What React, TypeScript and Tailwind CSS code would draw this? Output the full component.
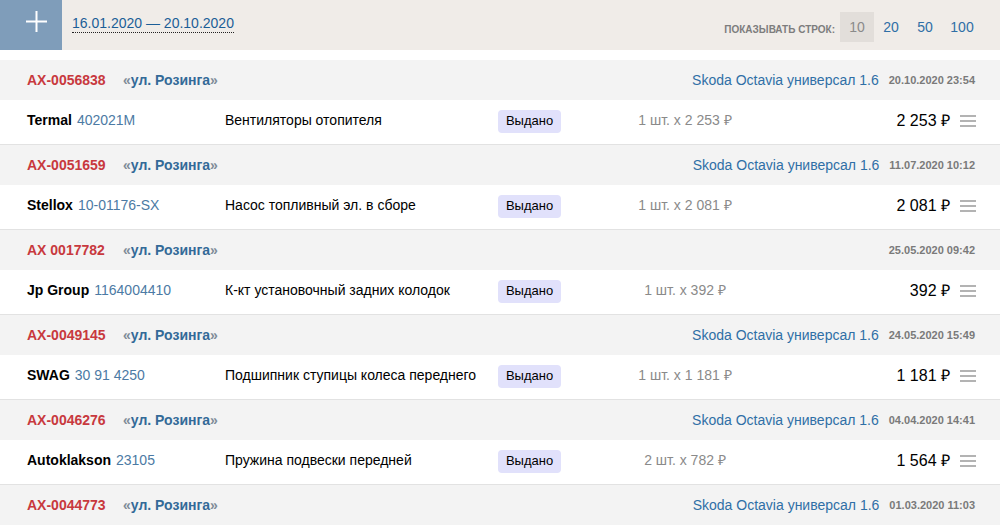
import React from "react";

type Row = {
  code: string;
  car: string;
  date: string;
  brand: string;
  art: string;
  desc: string;
  qty: string;
  price: string;
};

const rows: Row[] = [
  { code: "AX-0056838", car: "Skoda Octavia универсал 1.6", date: "20.10.2020 23:54", brand: "Termal", art: "402021M", desc: "Вентиляторы отопителя", qty: "1 шт. x 2 253 ₽", price: "2 253 ₽" },
  { code: "AX-0051659", car: "Skoda Octavia универсал 1.6", date: "11.07.2020 10:12", brand: "Stellox", art: "10-01176-SX", desc: "Насос топливный эл. в сборе", qty: "1 шт. x 2 081 ₽", price: "2 081 ₽" },
  { code: "AX 0017782", car: "", date: "25.05.2020 09:42", brand: "Jp Group", art: "1164004410", desc: "К-кт установочный задних колодок", qty: "1 шт. x 392 ₽", price: "392 ₽" },
  { code: "AX-0049145", car: "Skoda Octavia универсал 1.6", date: "24.05.2020 15:49", brand: "SWAG", art: "30 91 4250", desc: "Подшипник ступицы колеса переднего", qty: "1 шт. x 1 181 ₽", price: "1 181 ₽" },
  { code: "AX-0046276", car: "Skoda Octavia универсал 1.6", date: "04.04.2020 14:41", brand: "Autoklakson", art: "23105", desc: "Пружина подвески передней", qty: "2 шт. x 782 ₽", price: "1 564 ₽" },
];

function Header({ code, car, date }: { code: string; car: string; date: string }) {
  return (
    <div className="flex h-[40px] items-center bg-[#f3f3f3] pl-[27px] pr-[25px]">
      <div className="w-[96px] text-[14px] font-bold text-[#c8393e]">{code}</div>
      <div className="text-[14px] font-bold text-[#336a98]">
        <span className="text-[#7f8c98]">«</span>ул. Розинга<span className="text-[#7f8c98]">»</span>
      </div>
      <div className="flex-1" />
      {car && <div className="text-[14px] text-[#2f6fa6]">{car}</div>}
      <div className="ml-[10px] text-[11px] font-bold text-[#7a7a7a]">{date}</div>
    </div>
  );
}

function Item({ r }: { r: Row }) {
  return (
    <div className="flex h-[45px] items-center border-b border-[#e2e2e2] bg-white pb-[3px] pl-[27px] pr-[24px]">
      <div className="w-[198px] text-[14px]">
        <span className="font-bold text-black">{r.brand}</span>
        <span className="ml-[5px] text-[#4c7aa4]">{r.art}</span>
      </div>
      <div className="w-[273px] text-[14px] text-black">{r.desc}</div>
      <div className="w-[100px]">
        <span className="inline-flex h-[23px] w-[63px] items-center justify-center rounded-[4px] bg-[#e1e1fb] text-[13px] text-black">
          Выдано
        </span>
      </div>
      <div className="w-[174px] text-center text-[14px] text-[#8a8a8a]">{r.qty}</div>
      <div className="flex-1 text-right text-[16px] text-black">{r.price}</div>
      <div className="ml-[10px] flex w-[16px] flex-col gap-[3px]">
        <div className="h-[2px] bg-[#b3b3b3]" />
        <div className="h-[2px] bg-[#b3b3b3]" />
        <div className="h-[2px] bg-[#b3b3b3]" />
      </div>
    </div>
  );
}

export default function App() {
  return (
    <div className="h-[532px] w-[1000px] overflow-hidden bg-white" style={{ fontFamily: '"Liberation Sans", Arial, sans-serif' }}>
      <div className="flex h-[50px] bg-[#f0ece8]">
        <div className="flex w-[62px] items-start justify-center bg-[#7f9dba] pt-[11px] pl-[10px]">
          <svg width="21" height="21" viewBox="0 0 21 21">
            <path d="M10.5 0v21M0 10.5h21" stroke="white" strokeWidth="2" />
          </svg>
        </div>
        <div className="pl-[10px] pt-[11px]">
          <span className="border-b border-dotted border-[#222] pb-[1px] text-[14px] text-[#1b5e97]">16.01.2020 — 20.10.2020</span>
        </div>
        <div className="flex-1" />
        <div className="flex items-start pr-[18px] pt-[12px]">
          <span className="mr-[5px] mt-[10px] text-[10px] font-bold uppercase text-[#7d7d7d]">Показывать строк:</span>
          <span className="flex h-[30px] w-[34px] items-center justify-center bg-[#e2deda] text-[14px] text-[#8a8a8a]">10</span>
          <span className="flex h-[30px] w-[34px] items-center justify-center text-[14px] text-[#2f6fa6]">20</span>
          <span className="flex h-[30px] w-[34px] items-center justify-center text-[14px] text-[#2f6fa6]">50</span>
          <span className="flex h-[30px] w-[40px] items-center justify-center text-[14px] text-[#2f6fa6]">100</span>
        </div>
      </div>
      <div className="h-[10px]" />
      {rows.map((r) => (
        <div key={r.code}>
          <Header code={r.code} car={r.car} date={r.date} />
          <Item r={r} />
        </div>
      ))}
      <Header code="AX-0044773" car="Skoda Octavia универсал 1.6" date="01.03.2020 11:03" />
    </div>
  );
}
